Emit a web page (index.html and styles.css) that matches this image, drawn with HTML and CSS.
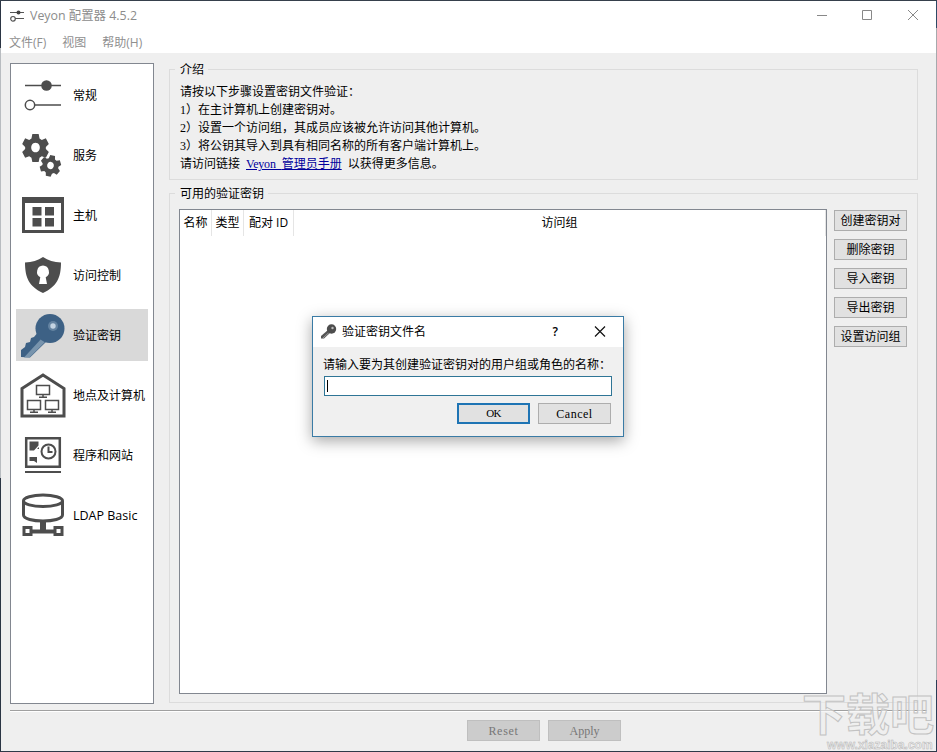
FILE: index.html
```html
<!doctype html>
<html lang="zh-CN">
<head>
	<meta charset="UTF-8" />
	<title>Veyon 配置器 4.5.2</title>
	<link rel="stylesheet" href="styles.css">
</head>
<body>
<div class="window">
	<!--标题栏-->
	<div class="titlebar">
		<svg class="logo" width="16" height="14" viewBox="0 0 16 14" fill="none" stroke="#555">
			<path d="M1 3.500h14M6 9.500h9" stroke-width="1.200"/>
			<circle cx="9.500" cy="3.500" r="2" fill="#444" stroke="none"/>
			<circle cx="4" cy="9.800" r="2.300" stroke-width="1.200"/>
		</svg>
		<span class="title">Veyon 配置器 4.5.2</span>
		<svg class="winbtns" width="110" height="14" viewBox="0 0 110 14" fill="none" stroke="#888">
			<path d="M9 7.500h10M100 2l10 10M110 2l-10 10"/>
			<path d="M54.500 2.500h9v9h-9z"/>
		</svg>
	</div>
	<!--菜单-->
	<div class="menubar">
		<span>文件(F)</span>
		<span>视图</span>
		<span>帮助(H)</span>
	</div>

	<div class="main">
		<!--左侧导航-->
		<ul class="side">
			<li>
				<svg width="48" height="48" viewBox="0 0 48 48">
					<path d="M6 14.500h36M15 34h27" stroke="#4d4d4d" stroke-width="1.300"/>
					<circle cx="27.500" cy="14.500" r="5.300" fill="#4d4d4d"/>
					<circle cx="11" cy="34" r="4.700" fill="#fff" stroke="#4d4d4d" stroke-width="1.500"/>
				</svg>
				<span>常规</span>
			</li>
			<li>
				<svg width="48" height="48" viewBox="0 0 48 48" fill="#4d4d4d">
					<defs>
						<path id="gear" fill-rule="evenodd" d="M-3.500-13.500h7l1 4.500 2.500 1.400 4.500-1.700 3.300 5.800-3.300 3v2l3.300 3-3.300 5.800-4.500-1.500-2.500 1.400-1 4.300h-7l-1-4.300-2.500-1.400-4.500 1.500-3.300-5.800 3.300-3v-2l-3.300-3 3.300-5.800 4.500 1.700 2.500-1.400zM0-4.800a4.800 4.800 0 1 0 .01 0z"/>
					</defs>
					<use href="#gear" transform="translate(16.500 16.500) scale(.9 1)"/>
					<use href="#gear" transform="translate(31.500 34.500) rotate(12) scale(.7 .76)"/>
				</svg>
				<span>服务</span>
			</li>
			<li>
				<svg width="48" height="48" viewBox="0 0 48 48" fill="#4d4d4d">
					<path fill-rule="evenodd" d="M3 6h42v36H3zM6 12v27h36V12z"/>
					<path d="M13.500 16h9v8.500h-9zM26 16h9v8.500h-9zM13.500 27h9v8.500h-9zM26 27h9v8.500h-9z"/>
				</svg>
				<span>主机</span>
			</li>
			<li>
				<svg width="48" height="48" viewBox="0 0 48 48" fill="#4d4d4d">
					<path d="M24 6c5 3.500 11 5 18 5.500 0 15-4 24-18 30.500C10 35.500 6 26.500 6 11.500 13 11 19 9.500 24 6z"/>
					<path fill="#fff" d="M24 14.500a6.300 6.300 0 0 1 2.700 11.800L28 33h-8l1.300-6.700A6.300 6.300 0 0 1 24 14.500z"/>
				</svg>
				<span>访问控制</span>
			</li>
			<li class="current">
				<svg width="48" height="48" viewBox="0 0 48 48">
					<path fill="#3d6185" d="M20 20L15 26l-3 1-1 4-4 1-1 4-4 3v7l9 .5L29 29z"/>
					<path fill="#7894ad" d="M23 27L5 46.500h5.500L28 29z"/>
					<circle cx="31" cy="17.500" r="14.500" fill="#3d6185"/>
					<circle cx="34" cy="15" r="5" fill="#6483a1"/>
					<circle cx="34" cy="15" r="2.700" fill="#c4d4e3"/>
				</svg>
				<span>验证密钥</span>
			</li>
			<li>
				<svg width="48" height="48" viewBox="0 0 48 48" fill="none" stroke="#4d4d4d">
					<path stroke-width="3" d="M3 17.500L24 4l21 13.500v27.500H3z"/>
					<g id="pc" stroke-width="1.500">
						<path d="M17.500 14.500h13v9h-13zM24 23.500v2.500M20 26.200h8"/>
					</g>
					<use href="#pc" x="-9" y="15"/>
					<use href="#pc" x="9" y="15"/>
				</svg>
				<span>地点及计算机</span>
			</li>
			<li>
				<svg width="48" height="48" viewBox="0 0 48 48" fill="none" stroke="#4d4d4d">
					<path stroke-width="2.500" d="M7.200 7.200h33.600v28.600H7.200z"/>
					<path stroke-width="2" d="M6 41h36"/>
					<circle cx="29.500" cy="20.500" r="7" stroke-width="2"/>
					<path stroke-width="2" d="M29.500 15.500v5.500h4"/>
					<path fill="#4d4d4d" stroke="none" d="M10.500 10.500h9v4l-4.500 5h-4.500zM18 18l2-2v2zM10.500 26h7.500v6l-3-2h-4.500z"/>
				</svg>
				<span>程序和网站</span>
			</li>
			<li>
				<svg width="48" height="48" viewBox="0 0 48 48" fill="none" stroke="#4d4d4d" stroke-width="3">
					<ellipse cx="24" cy="9.800" rx="19.500" ry="5.800"/>
					<path d="M4.500 10v14c0 8 39 8 39 0V10"/>
					<path stroke-width="6" d="M24 30v10"/>
					<path d="M12 40.500h24" stroke-width="4"/>
					<path d="M5 36.500h7v7H5zM36 36.500h7v7h-7z" fill="#fff"/>
				</svg>
				<span class="latin">LDAP Basic</span>
			</li>
		</ul>

		<div class="content">
			<!--介绍-->
			<div class="group intro">
				<h3>介绍</h3>
				<p>请按以下步骤设置密钥文件验证：</p>
				<p>1）在主计算机上创建密钥对。</p>
				<p>2）设置一个访问组，其成员应该被允许访问其他计算机。</p>
				<p>3）将公钥其导入到具有相同名称的所有客户端计算机上。</p>
				<p>请访问链接<a href="#"><i>Veyon </i>管理员手册</a>以获得更多信息。</p>
			</div>
			<!--密钥列表-->
			<div class="group keys">
				<h3>可用的验证密钥</h3>
				<div class="table">
					<div class="thead">
						<span>名称</span>
						<span>类型</span>
						<span>配对 ID</span>
						<span>访问组</span>
					</div>
				</div>
				<div class="btns">
					<button>创建密钥对</button>
					<button>删除密钥</button>
					<button>导入密钥</button>
					<button>导出密钥</button>
					<button>设置访问组</button>
				</div>
			</div>
		</div>
	</div>

	<div class="footer">
		<button class="disabled reset">Reset</button>
		<button class="disabled">Apply</button>
	</div>
</div>

<!--弹出框-->
<div class="dialog">
	<div class="dialog-title">
		<svg width="16" height="16" viewBox="0 0 16 16">
			<path fill="#555" d="M7 6L0 12v2.500h3L10 8z"/>
			<path stroke="#999" d="M2 14l6.500-6"/>
			<circle cx="10.500" cy="5" r="4.700" fill="#4d4d4d"/>
			<circle cx="11.500" cy="4" r="1.200" fill="#bbb"/>
		</svg>
		<span>验证密钥文件名</span>
		<b>?</b>
		<svg class="close" width="12" height="12" viewBox="0 0 12 12" stroke="#111" stroke-width="1.200">
			<path d="M1 0.500l10 10M11 0.500l-10 10"/>
		</svg>
	</div>
	<p>请输入要为其创建验证密钥对的用户组或角色的名称：</p>
	<div class="input"><span class="caret"></span></div>
	<div class="dialog-btns">
		<button class="ok">OK</button>
		<button class="cancel">Cancel</button>
	</div>
</div>

<!--水印-->
<div class="mark">
	<div class="mark-name">下载吧</div>
	<div class="mark-url">www.xiazaiba.com</div>
</div>
</body>
</html>
```
FILE: styles.css
```css
* {
    padding: 0;
    margin: 0;
    list-style: none;
    box-sizing: border-box;
}

body {
    width: 937px;
    height: 752px;
    padding: 1px;
    overflow: hidden;
    position: relative;
    background: linear-gradient(#36404c, #36404c) 0 0 / 937px 1px no-repeat,
        linear-gradient(#2b3544 48px, #b8bcc0 48px, #b8bcc0 478px, #2b3544 478px) 0 0 / 1px 752px no-repeat,
        linear-gradient(#2d4a66 28px, #a6a9ad 28px, #a6a9ad 680px, #2b3c55 680px) 936px 0 / 1px 752px no-repeat,
        #2f3a48;
    font: 12px/18px "Liberation Serif", "Noto Sans CJK SC", serif;
    color: #000;
}

.window {
    width: 935px;
    height: 750px;
    background: #efefef;
    display: flex;
    flex-direction: column;
}

.titlebar {
    height: 30px;
    flex: none;
    background: #fff;
    display: flex;
    align-items: center;
    padding: 0 18px 0 8px;
    font-family: "Open Sans", "Noto Sans CJK SC", sans-serif;
    color: #8c8c8c;
}

.title {
    margin-left: 5px;
    font-size: 12.4px;
}

.winbtns {
    margin-left: auto;
    margin-bottom: 2px;
}

.menubar {
    height: 22px;
    flex: none;
    background: #fff;
    display: flex;
    gap: 16px;
    padding: 3px 8px 0;
    font-family: "Open Sans", "Noto Sans CJK SC", sans-serif;
    color: #8f8f8f;
}

.main {
    height: 657px;
    flex: none;
    display: flex;
    padding: 10px 18px 6px 9px;
}

.side {
    width: 144px;
    height: 641px;
    flex: none;
    border: 1px solid #828790;
    background: #fff;
    padding: 5px;
    font-family: "Open Sans", "Noto Sans CJK SC", sans-serif;
}

.side li {
    width: 132px;
    height: 52px;
    margin-bottom: 8px;
    padding-left: 3px;
    display: flex;
    align-items: center;
    white-space: nowrap;
}

.side li svg {
    flex: none;
    margin-right: 6px;
}

.side li span {
    padding-top: 2px;
}

.side li.current {
    background: #d9d9d9;
}

.side .latin {
    font-size: 12.5px;
}

.content {
    flex: 1;
    margin-left: 15px;
    padding-top: 6px;
}

.group {
    border: 1px solid #dcdcdc;
    padding: 0 10px;
}

.group h3 {
    width: fit-content;
    height: 18px;
    margin: -9px 0 0 -5px;
    padding: 0 4px 0 5px;
    background: #efefef;
    font-size: 12px;
    font-weight: normal;
}

.intro {
    height: 111px;
}

.intro h3 {
    margin-bottom: 4px;
}

.intro a {
    margin: 0 6px;
    color: #00009c;
}

.intro i {
    font-style: normal;
    letter-spacing: -0.2px;
    word-spacing: 3.2px;
}

.keys {
    height: 510px;
    margin-top: 13px;
    display: grid;
    grid-template-columns: 648px 73px;
    grid-template-rows: 15px 485px;
    column-gap: 7px;
    padding-left: 9px;
}

.keys h3 {
    grid-column: 1 / 3;
    margin-left: -4px;
}

.table {
    border: 1px solid #828790;
    background: #fff;
}

.thead {
    height: 26px;
    display: grid;
    grid-template-columns: 32px 32px 50px 1fr;
    line-height: 26px;
    text-align: center;
    font-family: "Open Sans", "Noto Sans CJK SC", sans-serif;
}

.thead span {
    border-right: 1px solid #e5e5e5;
}

button {
    width: 73px;
    height: 21px;
    border: 1px solid #adadad;
    background: #e1e1e1;
    padding-top: 2px;
    font: 12px/17px "Liberation Serif", "Noto Sans CJK SC", serif;
    color: #000;
}

.btns {
    display: flex;
    flex-direction: column;
    gap: 8px;
    padding-top: 1px;
}

.footer {
    flex: 1;
    margin: 0 9px;
    border-top: 1px solid #a0a0a0;
    box-shadow: inset 0 1px #fff;
    display: flex;
    gap: 8px;
    padding: 9px 0 0 457px;
}

button.disabled {
    border-color: #bfbfbf;
    background: #ccc;
    color: #777;
}

.reset {
    letter-spacing: 0.7px;
}

.dialog {
    position: absolute;
    left: 312px;
    top: 316px;
    width: 312px;
    height: 121px;
    border: 1px solid #3a7ba5;
    background: #f0f0f0;
    box-shadow: 0 4px 14px rgba(0, 0, 0, 0.35);
}

.dialog-title {
    height: 30px;
    background: #fff;
    display: flex;
    align-items: center;
    padding: 0 17px 0 8px;
    font-family: "Open Sans", "Noto Sans CJK SC", sans-serif;
}

.dialog-title span {
    margin-left: 5px;
}

.dialog-title b {
    margin-left: auto;
    font-weight: 600;
}

.dialog-title .close {
    margin-left: 36px;
}

.dialog p {
    margin: 9px 0 0 10px;
    white-space: nowrap;
}

.input {
    width: 288px;
    height: 20px;
    margin: 2px 0 0 11px;
    border: 1px solid #2f7596;
    background: #fff;
    padding: 3px 2px;
}

.caret {
    display: block;
    width: 1px;
    height: 12px;
    background: #000;
}

.dialog-btns {
    display: flex;
    justify-content: flex-end;
    gap: 8px;
    padding: 7px 12px 0 0;
}

.ok {
    border: 2px solid #1e74b4;
    padding-top: 0;
    font-size: 11px;
    letter-spacing: -0.8px;
}

.cancel {
    letter-spacing: 0.5px;
}

.mark {
    position: absolute;
    left: 802px;
    top: 693px;
    width: 135px;
    height: 59px;
    color: rgba(240, 240, 240, 0.6);
    -webkit-text-stroke: 1px #c2c2c2;
    font-family: "Liberation Sans", "Noto Sans CJK SC", sans-serif;
    font-weight: bold;
    white-space: nowrap;
}

.mark-name {
    height: 46px;
    font-size: 44px;
    line-height: 46px;
}

.mark-url {
    margin-left: 25px;
    font-size: 12px;
    line-height: 13px;
    -webkit-text-stroke: 0.5px #b5b5b5;
}
```
